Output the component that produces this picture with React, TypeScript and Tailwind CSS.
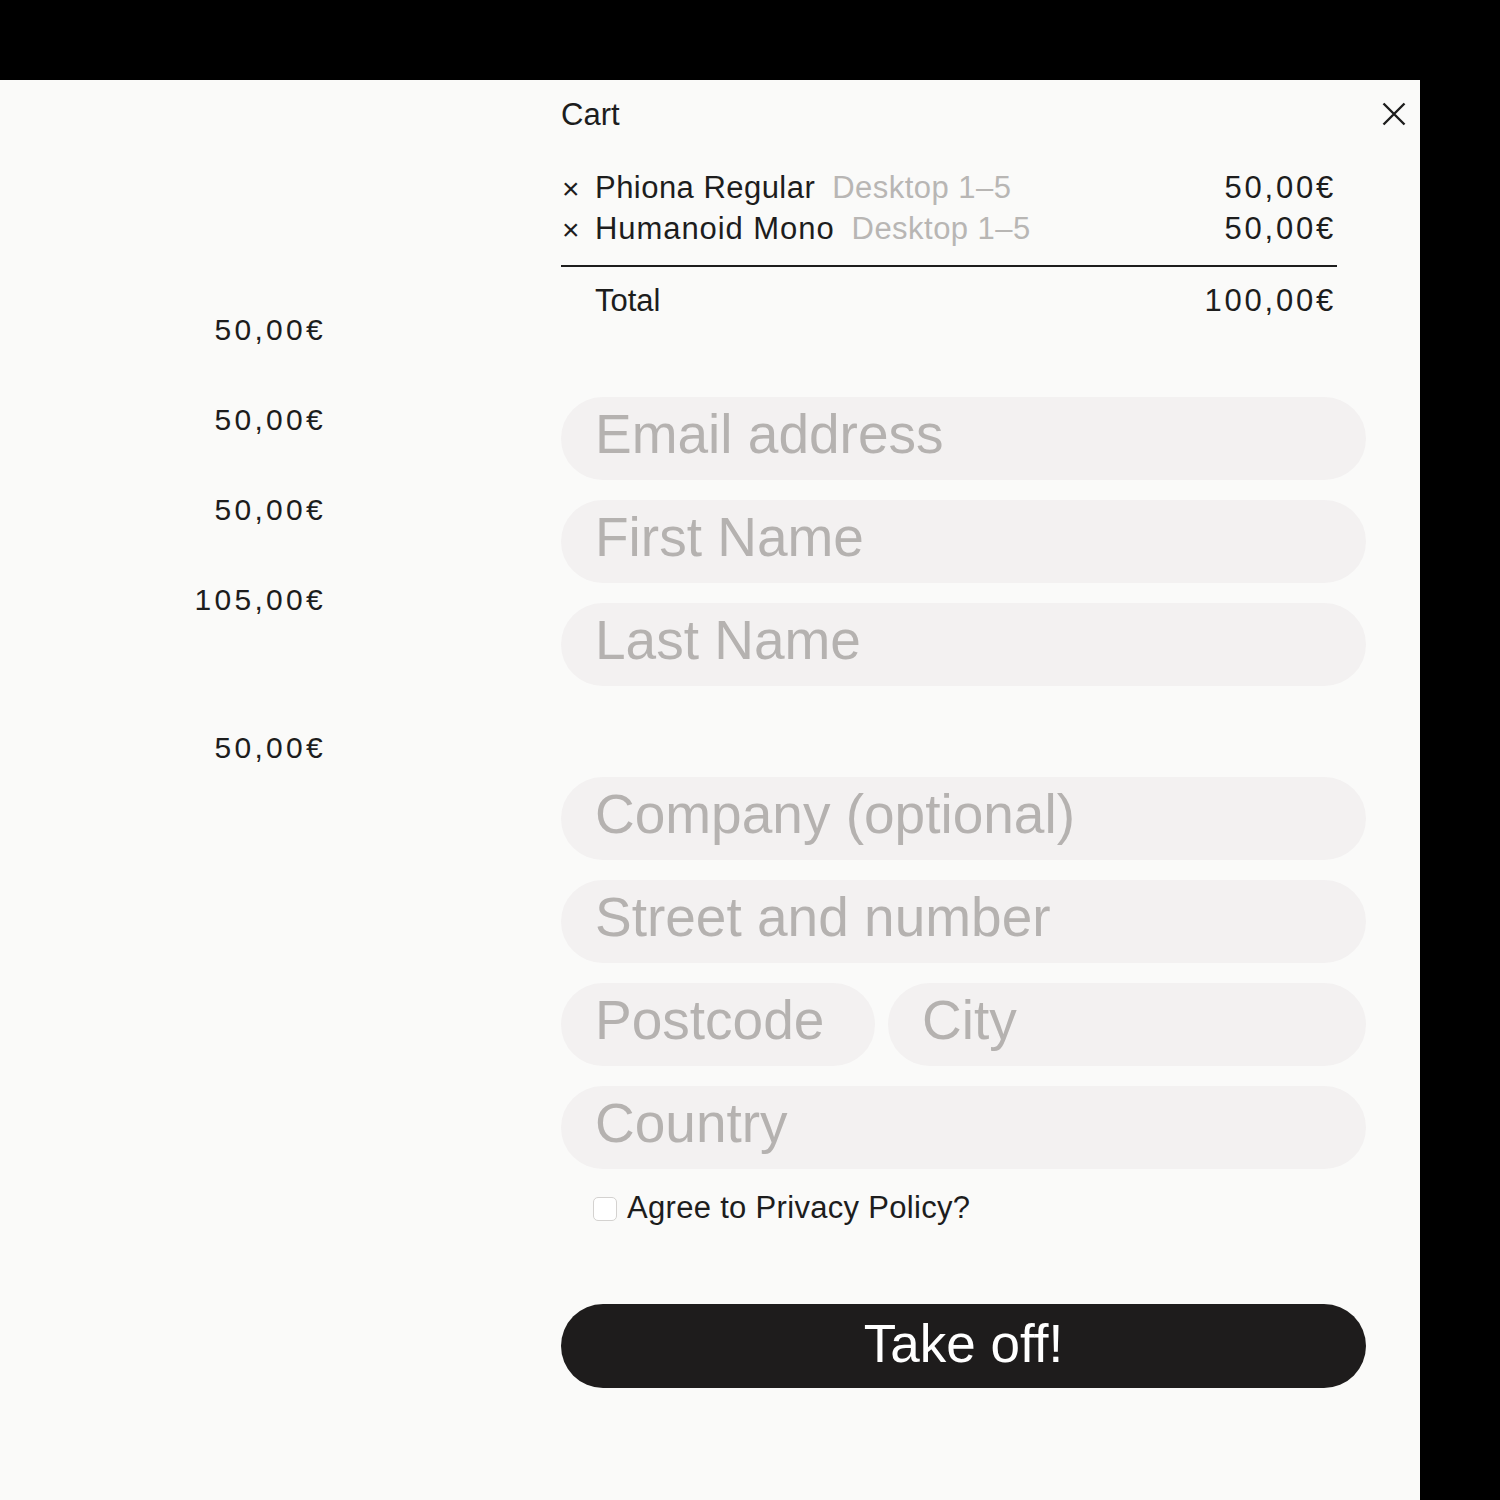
import React from "react";

const font = { fontFamily: '"Liberation Sans", Arial, sans-serif' };

function Field({ placeholder, className = "" }: { placeholder: string; className?: string }) {
  return (
    <input
      placeholder={placeholder}
      className={`h-[83px] rounded-full bg-[#f3f1f1] pl-[34px] pb-[9px] text-[55px] text-[#1d1d1d] placeholder:text-[#b5b2b0] outline-none ${className}`}
    />
  );
}

export default function App() {
  const leftPrices = ["50,00€", "50,00€", "50,00€", "105,00€"];
  const items = [
    { name: "Phiona Regular", lic: "Desktop 1–5", price: "50,00€" },
    { name: "Humanoid Mono", lic: "Desktop 1–5", price: "50,00€" },
  ];
  return (
    <div className="w-[1500px] h-[1500px] bg-black flex flex-col text-[#1d1d1d]" style={font}>
      <div className="h-[80px] shrink-0" />
      <div className="flex flex-1">
        <div className="w-[1420px] h-[1420px] bg-[#fafaf9] flex">
          {/* left page content */}
          <div className="w-[323px] pt-[205px] flex flex-col items-end text-[30px] tracking-[0.11em] leading-none">
            {leftPrices.map((p, i) => (
              <div key={i} className="h-[90px] flex items-center mr-[-3px]">{p}</div>
            ))}
            <div className="h-[90px] flex items-center mt-[58px] mr-[-3px]">50,00€</div>
          </div>
          {/* cart */}
          <div className="ml-[238px] w-[805px] pt-[15px] flex flex-col">
            <div className="w-[844px] h-[41px] flex items-center justify-between">
              <span className="text-[31px]">Cart</span>
              <svg width="24" height="24" viewBox="0 0 24 24" className="mr-[-1px] mt-[-3px]">
                <path d="M1.5 1.5 L22.5 22.5 M22.5 1.5 L1.5 22.5" stroke="#1d1d1d" strokeWidth="2.4" fill="none" />
              </svg>
            </div>
            <div className="mt-[32px] w-[776px] flex flex-col">
              {items.map((it, i) => (
                <div key={i} className="h-[41px] flex items-center text-[31px] tracking-[0.015em]">
                  <span className="w-[34px] pl-[1px] text-[30px]">×</span>
                  <span className={i === 1 ? "tracking-[0.03em]" : ""}>{it.name}</span>
                  <span className="ml-[17px] text-[#b8b6b4]">{it.lic}</span>
                  <span className="ml-auto pr-[4px] tracking-[0.09em] mr-[-3px]">{it.price}</span>
                </div>
              ))}
              <div className="mt-[15px] h-[2px] bg-[#1d1d1d]" />
              <div className="mt-[14px] h-[41px] flex items-center pl-[34px] text-[31px]">
                <span>Total</span>
                <span className="ml-auto pr-[4px] tracking-[0.09em] mr-[-3px]">100,00€</span>
              </div>
            </div>
            <div className="mt-[75px] flex flex-col gap-[20px]">
              <Field placeholder="Email address" />
              <Field placeholder="First Name" />
              <Field placeholder="Last Name" />
              <Field placeholder="Company (optional)" className="mt-[71px]" />
              <Field placeholder="Street and number" />
              <div className="flex gap-[13px]">
                <Field placeholder="Postcode" className="w-[314px]" />
                <Field placeholder="City" className="w-[478px]" />
              </div>
              <Field placeholder="Country" />
            </div>
            <div className="mt-[19px] h-[41px] flex items-center pl-[32px] text-[31px] tracking-[0.01em]">
              <span className="w-[24px] h-[24px] rounded-[5px] border border-[#d4d2d0] bg-white" />
              <span className="ml-[10px]">Agree to Privacy Policy?</span>
            </div>
            <button className="mt-[75px] h-[84px] rounded-full bg-[#1e1c1c] text-white text-[53px] pb-[4px] flex items-center justify-center">
              Take off!
            </button>
          </div>
        </div>
        <div className="w-[80px]" />
      </div>
    </div>
  );
}
